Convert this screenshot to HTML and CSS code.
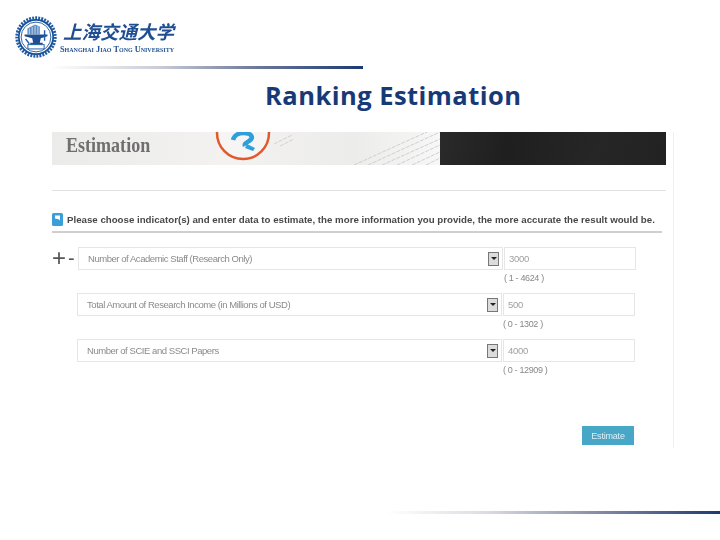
FILE: index.html
```html
<!DOCTYPE html>
<html lang="en">
<head>
<meta charset="utf-8">
<title>Ranking Estimation</title>
<link rel="stylesheet" href="styles.css">
</head>
<body>
<div class="slide">
  <header class="brand">
    <svg class="seal" width="42" height="42" viewBox="0 0 44 44" aria-hidden="true">
      <circle cx="22" cy="22" r="20" fill="none" stroke="#1f5da6" stroke-width="3.4" stroke-dasharray="2 1.2"/>
      <circle cx="22" cy="22" r="18" fill="#fff" stroke="#1a4f96" stroke-width="1.8"/>
      <circle cx="22" cy="22" r="15.6" fill="none" stroke="#1f5da6" stroke-width="1"/>
      <path d="M13 19v-6l8-4 5 2v8z" fill="#5d8bc0"/>
      <path d="M15 13v6M18 11.500v7.500M21 10v9M24 10.500v8.500" stroke="#fff" stroke-width=".7"/>
      <path d="M10 19.500h24v1.800l-7 2-1 4.700h3v2H16v-2h3l-1-4.700-8-2z" fill="#1f4f92"/>
      <path d="M11 24l4 5M31 15v11" stroke="#1f5da6" stroke-width="1.500" fill="none"/>
      <rect x="13.500" y="30" width="17" height="4.500" fill="#fff" stroke="#1f5da6"/>
    </svg>
    <div class="wordmark">
      <div class="cn">上海交通大学</div>
      <div class="en">Shanghai Jiao Tong University</div>
    </div>
  </header>
  <div class="rule-top"></div>
  <h1 class="title">Ranking Estimation</h1>

  <main class="panel">
    <div class="panel-inner">
      <div class="banner">
        <div class="banner-light">
          <span class="banner-title">Estimation</span>
          <svg class="banner-art" width="388" height="33" viewBox="0 0 388 33" aria-hidden="true">
            <circle cx="191" cy="1" r="26" fill="#f6f5f3" stroke="#e2582a" stroke-width="2.500"/>
            <path d="M181 8c1-5 6-7 11-7 8 0 10 5 5 8-3 2-5 3-4 5" fill="none" stroke="#2f9fdc" stroke-width="4.500"/>
            <path d="M195 12l8 4-2 3-8-3z" fill="#2f9fdc"/>
            <g fill="none" stroke="#cfcfce" stroke-width="1" stroke-dasharray="4 1.200">
              <path d="M222 12l18-9"/>
              <path d="M228 14l14-7"/>
              <path d="M316 33l72-33"/>
              <path d="M330 33l58-26"/>
              <path d="M345 33l43-20"/>
              <path d="M360 33l28-13"/>
              <path d="M374 33l14-7"/>
              <path d="M302 33l86-39"/>
            </g>
          </svg>
        </div>
        <div class="banner-dark"></div>
      </div>

      <div class="note">
        <span class="note-icon"><svg width="11" height="13" viewBox="0 0 11 13" aria-hidden="true"><rect width="11" height="13" rx="1.500" fill="#3a9fd8"/><path d="M3 2.500h5v5L6.600 6.200 3 5.600z" fill="#fff"/></svg></span>
        <span>Please choose indicator(s) and enter data to estimate, the more information you provide, the more accurate the result would be.</span>
      </div>

      <form class="rows">
        <div class="row first">
          <div class="ops"><span class="plus">+</span><span class="minus">-</span></div>
          <div class="select">
            <span>Number of Academic Staff (Research Only)</span>
            <span class="arrow"></span>
          </div>
          <div class="value">
            <div class="input">3000</div>
            <div class="range">( 1 - 4624 )</div>
          </div>
        </div>
        <div class="row">
          <div class="ops"></div>
          <div class="select">
            <span>Total Amount of Research Income (in Millions of USD)</span>
            <span class="arrow"></span>
          </div>
          <div class="value">
            <div class="input">500</div>
            <div class="range">( 0 - 1302 )</div>
          </div>
        </div>
        <div class="row">
          <div class="ops"></div>
          <div class="select">
            <span>Number of SCIE and SSCI Papers</span>
            <span class="arrow"></span>
          </div>
          <div class="value">
            <div class="input">4000</div>
            <div class="range">( 0 - 12909 )</div>
          </div>
        </div>
      </form>
      <div class="actions"><span class="button">Estimate</span></div>
    </div>
  </main>

  <div class="rule-bottom"></div>
</div>
</body>
</html>
```

FILE: styles.css
```css
* { box-sizing: border-box; }
html, body { margin: 0; padding: 0; background: #fff; }
.slide {
  width: 720px;
  height: 540px;
  overflow: hidden;
  display: flex;
  flex-direction: column;
  background: #fff;
  font-family: "Liberation Sans", Arial, sans-serif;
}
.brand {
  height: 66px;
  padding: 16px 0 0 15px;
  display: flex;
  align-items: flex-start;
  gap: 3px;
}
.seal { filter: blur(0.3px); flex: none; }
.wordmark { width: 114px; color: #1f4f92; filter: blur(0.35px); }
.cn {
  font-family: "Noto Sans CJK SC", "Noto Sans CJK JP", sans-serif;
  font-style: italic;
  font-weight: 700;
  font-size: 18.5px;
  line-height: 26px;
  letter-spacing: 0;
  margin: 2px 0 0 3px;
  white-space: nowrap;
}
.en {
  font-family: "Liberation Serif", serif;
  font-variant: small-caps;
  font-weight: 700;
  font-size: 8.3px;
  line-height: 10px;
  margin-top: 1px;
  white-space: nowrap;
}
.rule-top {
  width: 313px;
  height: 3px;
  margin-left: 50px;
  background: linear-gradient(90deg, #fff 0%, #c9ccd6 35%, #6f7a9c 65%, #1c3a72 100%);
}
.title {
  margin: 9px 0 0 265px;
  font-family: "Open Sans", sans-serif;
  font-size: 25.5px;
  line-height: 34px;
  font-weight: 700;
  letter-spacing: 0.47px;
  color: #173a76;
  white-space: nowrap;
}
.panel {
  margin: 20px 0 0 52px;
  width: 622px;
  height: 316px;
  border-right: 1px solid #efefef;
  flex: none;
}
.panel-inner { width: 614px; }
.banner { height: 33px; display: flex; }
.banner-light {
  flex: 1;
  position: relative;
  padding-left: 14px;
  background: linear-gradient(90deg, #ebebea 0%, #f3f2f1 45%, #ececeb 78%, #f7f7f7 100%);
  overflow: hidden;
}
.banner-title {
  position: relative;
  z-index: 1;
  display: inline-block;
  font-family: "Liberation Serif", serif;
  font-weight: 700;
  font-size: 22px;
  line-height: 26px;
  color: #6f6f6f;
  filter: blur(0.4px);
  transform: scaleX(0.82);
  transform-origin: left center;
}
.banner-art { position: absolute; left: 0; top: 0; filter: blur(0.3px); }
.banner-dark {
  width: 226px;
  background: linear-gradient(100deg, #2a2a2a 0%, #1f1f1f 30%, #262626 70%, #222 100%);
}
.note {
  margin-top: 25px;
  border-top: 1px solid #e2e2e2;
  padding-top: 17px;
  height: 41px;
  display: flex;
  gap: 4px;
  align-items: center;
  font-size: 9.7px;
  font-weight: 700;
  color: #484848;
  white-space: nowrap;
  filter: blur(0.3px);
}
.note-icon { display: flex; }
.rows {
  border-top: 2px solid #cfcfcf;
  margin-right: 4px;
  padding-top: 14px;
  display: flex;
  flex-direction: column;
}
.row {
  height: 46px;
  display: flex;
  align-items: flex-start;
  filter: blur(0.35px);
}
.row.first { padding-left: 1px; }
.ops {
  width: 25px;
  height: 22px;
  flex: none;
  display: flex;
  align-items: center;
  color: #555;
}
.plus { font-size: 24px; line-height: 22px; width: 16px; margin-left: -1px; }
.minus { font-size: 20px; line-height: 22px; }
.select {
  width: 425px;
  height: 23px;
  flex: none;
  border: 1px solid #e6e6e6;
  display: flex;
  align-items: center;
  justify-content: space-between;
  padding: 0 0 0 9px;
  font-size: 9.5px;
  letter-spacing: -0.45px;
  color: #8a8a8a;
}
.arrow {
  flex: none;
  width: 11px;
  height: 14px;
  background: #dcdcdc;
  border: 1px solid #777;
  display: flex;
  align-items: center;
  justify-content: center;
  margin-right: 3px;
}
.arrow::after {
  content: "";
  border-left: 3px solid transparent;
  border-right: 3px solid transparent;
  border-top: 3px solid #222;
}
.value { margin-left: 1px; width: 132px; flex: none; }
.input {
  height: 23px;
  border: 1px solid #e6e6e6;
  padding-left: 4px;
  display: flex;
  align-items: center;
  font-size: 9.5px;
  letter-spacing: -0.3px;
  color: #a0a0a0;
}
.range {
  margin-top: 2px;
  font-size: 9px;
  letter-spacing: -0.35px;
  line-height: 12px;
  color: #888;
}
.actions {
  margin-top: 41px;
  display: flex;
  justify-content: flex-end;
  padding-right: 32px;
}
.button {
  width: 52px;
  height: 19px;
  background: #48a6c6;
  color: #dceff5;
  font-size: 9px;
  letter-spacing: -0.2px;
  display: flex;
  align-items: center;
  justify-content: center;
  filter: blur(0.3px);
}
.rule-bottom {
  margin: 63px 0 0 385px;
  width: 335px;
  height: 3px;
  flex: none;
  background: linear-gradient(90deg, #fff 0%, #dcdde2 30%, #8f94ac 60%, #1c3a72 100%);
}
```
